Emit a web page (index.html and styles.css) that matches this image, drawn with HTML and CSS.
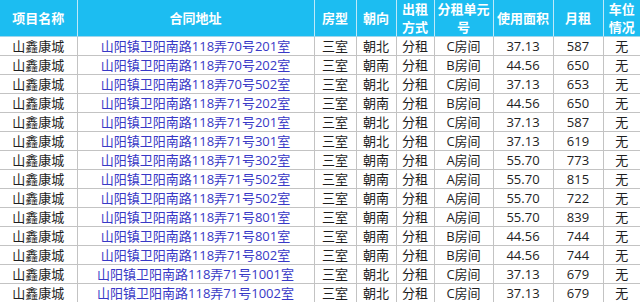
FILE: index.html
```html
<!DOCTYPE html>
<html lang="zh-CN">
<head>
<meta charset="utf-8">
<title>山鑫康城</title>
<link rel="stylesheet" href="styles.css">
</head>
<body>
<table class="sheet">
  <colgroup>
    <col class="c-name"><col class="c-addr"><col class="c-type"><col class="c-dir"><col class="c-mode"><col class="c-unit"><col class="c-area"><col class="c-rent"><col class="c-park">
  </colgroup>
  <thead>
    <tr>
      <th>项目名称</th><th>合同地址</th><th>房型</th><th>朝向</th><th>出租<br>方式</th><th>分租单元<br>号</th><th>使用面积</th><th>月租</th><th>车位<br>情况</th>
    </tr>
  </thead>
  <tbody>
    <tr><td>山鑫康城</td><td class="addr">山阳镇卫阳南路118弄70号201室</td><td>三室</td><td>朝北</td><td>分租</td><td>C房间</td><td>37.13</td><td>587</td><td>无</td></tr>
    <tr><td>山鑫康城</td><td class="addr">山阳镇卫阳南路118弄70号202室</td><td>三室</td><td>朝南</td><td>分租</td><td>B房间</td><td>44.56</td><td>650</td><td>无</td></tr>
    <tr><td>山鑫康城</td><td class="addr">山阳镇卫阳南路118弄70号502室</td><td>三室</td><td>朝北</td><td>分租</td><td>C房间</td><td>37.13</td><td>653</td><td>无</td></tr>
    <tr><td>山鑫康城</td><td class="addr">山阳镇卫阳南路118弄71号202室</td><td>三室</td><td>朝南</td><td>分租</td><td>B房间</td><td>44.56</td><td>650</td><td>无</td></tr>
    <tr><td>山鑫康城</td><td class="addr">山阳镇卫阳南路118弄71号201室</td><td>三室</td><td>朝北</td><td>分租</td><td>C房间</td><td>37.13</td><td>587</td><td>无</td></tr>
    <tr><td>山鑫康城</td><td class="addr">山阳镇卫阳南路118弄71号301室</td><td>三室</td><td>朝北</td><td>分租</td><td>C房间</td><td>37.13</td><td>619</td><td>无</td></tr>
    <tr><td>山鑫康城</td><td class="addr">山阳镇卫阳南路118弄71号302室</td><td>三室</td><td>朝南</td><td>分租</td><td>A房间</td><td>55.70</td><td>773</td><td>无</td></tr>
    <tr><td>山鑫康城</td><td class="addr">山阳镇卫阳南路118弄71号502室</td><td>三室</td><td>朝南</td><td>分租</td><td>A房间</td><td>55.70</td><td>815</td><td>无</td></tr>
    <tr><td>山鑫康城</td><td class="addr">山阳镇卫阳南路118弄71号502室</td><td>三室</td><td>朝南</td><td>分租</td><td>A房间</td><td>55.70</td><td>722</td><td>无</td></tr>
    <tr><td>山鑫康城</td><td class="addr">山阳镇卫阳南路118弄71号801室</td><td>三室</td><td>朝南</td><td>分租</td><td>A房间</td><td>55.70</td><td>839</td><td>无</td></tr>
    <tr><td>山鑫康城</td><td class="addr">山阳镇卫阳南路118弄71号801室</td><td>三室</td><td>朝南</td><td>分租</td><td>B房间</td><td>44.56</td><td>744</td><td>无</td></tr>
    <tr><td>山鑫康城</td><td class="addr">山阳镇卫阳南路118弄71号802室</td><td>三室</td><td>朝南</td><td>分租</td><td>B房间</td><td>44.56</td><td>744</td><td>无</td></tr>
    <tr><td>山鑫康城</td><td class="addr">山阳镇卫阳南路118弄71号1001室</td><td>三室</td><td>朝北</td><td>分租</td><td>C房间</td><td>37.13</td><td>679</td><td>无</td></tr>
    <tr><td>山鑫康城</td><td class="addr">山阳镇卫阳南路118弄71号1002室</td><td>三室</td><td>朝北</td><td>分租</td><td>C房间</td><td>37.13</td><td>679</td><td>无</td></tr>
  </tbody>
</table>
</body>
</html>
```

FILE: styles.css
```css
html, body {
  margin: 0;
  padding: 0;
  background: #ffffff;
  overflow: hidden;
}

.sheet {
  width: 640px;
  border-collapse: collapse;
  table-layout: fixed;
  font-family: "Open Sans", "Noto Sans CJK SC", sans-serif;
  font-size: 13px;
  color: #1e1e1e;
}

.c-name { width: 77px; }
.c-addr { width: 237px; }
.c-type { width: 42px; }
.c-dir { width: 40px; }
.c-mode { width: 38px; }
.c-unit { width: 59px; }
.c-area { width: 60px; }
.c-rent { width: 50px; }
.c-park { width: 37px; }

.sheet th {
  background: #1cbdf1;
  color: #ffffff;
  font-weight: bold;
  height: 36px;
  padding: 0;
  line-height: 18px;
  text-align: center;
  vertical-align: middle;
  white-space: nowrap;
  border-left: 1px solid #bfe9f9;
  border-bottom: 1px solid #9fd6ec;
}

.sheet th:first-child {
  border-left: none;
}

.sheet td {
  height: 18px;
  padding: 0;
  line-height: 18px;
  text-align: center;
  vertical-align: middle;
  white-space: nowrap;
  border-left: 1px solid #c3c3c3;
  border-bottom: 1px solid #c3c3c3;
}

.sheet td:first-child {
  border-left: none;
}

.sheet td.addr {
  color: #3838c6;
}
```
